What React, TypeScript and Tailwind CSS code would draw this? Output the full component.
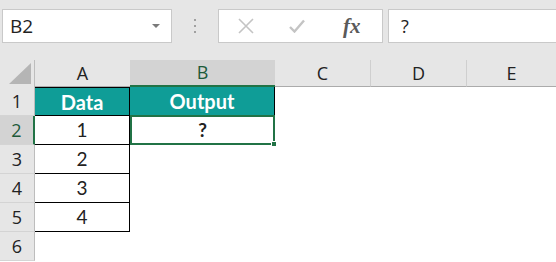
import React from 'react'

const cols = [
  { key: 'A', width: 'w-[95px]' },
  { key: 'B', width: 'w-[145px]' },
  { key: 'C', width: 'w-[96px]' },
  { key: 'D', width: 'w-[96px]' },
  { key: 'E', width: 'flex-1' },
]

const values = ['1', '2', '3', '4']

export default function App() {
  return (
    <div className="w-[556px] h-[262px] overflow-hidden bg-white font-['Open_Sans',sans-serif] text-[#222]">
      {/* formula bar */}
      <div className="h-[60px] bg-[#e6e6e6] flex items-start pt-[9px] pl-[2px]">
        <div className="w-[170px] h-[34px] bg-white border border-[#c9c9c9] flex items-center justify-between pl-[7px] pr-[11px]">
          <span className="text-[19px] leading-none">B2</span>
          <span className="w-0 h-0 border-l-[4px] border-r-[4px] border-t-[4px] border-l-transparent border-r-transparent border-t-[#7a7a7a]" />
        </div>
        <div className="w-[46px] h-[34px] flex flex-col items-center justify-center gap-[4px]">
          <span className="w-[2px] h-[2px] bg-[#a0a0a0]" />
          <span className="w-[2px] h-[2px] bg-[#a0a0a0]" />
          <span className="w-[2px] h-[2px] bg-[#a0a0a0]" />
        </div>
        <div className="w-[165px] h-[34px] bg-white border border-[#c9c9c9] flex items-center">
          <svg width="16" height="16" viewBox="0 0 16 16" className="ml-[19px]">
            <path d="M1 1 L15 15 M15 1 L1 15" stroke="#c4c4c4" strokeWidth="1.6" fill="none" />
          </svg>
          <svg width="16" height="14" viewBox="0 0 16 14" className="ml-[35px]">
            <path d="M1 8 L5.5 12.5 L15 1.5" stroke="#c4c4c4" strokeWidth="2.4" fill="none" />
          </svg>
          <span className="ml-[38px] text-[21px] leading-none italic font-bold text-[#5a5a5a] font-['Liberation_Serif',serif]">
            fx
          </span>
        </div>
        <div className="ml-[5px] flex-1 h-[34px] bg-white border border-[#c9c9c9] border-r-0 flex items-center pl-[12px]">
          <span className="text-[18px] leading-none">?</span>
        </div>
      </div>

      {/* column headers */}
      <div className="flex h-[27px]">
        <div className="w-[35px] bg-[#e6e6e6] border-r border-[#bdbdbd] flex items-end justify-end pr-[3px] pb-[3px]">
          <span className="w-[22px] h-[21px] bg-[#b5b5b5] [clip-path:polygon(100%_0,100%_100%,0_100%)]" />
        </div>
        {cols.map((c) => (
          <div
            key={c.key}
            className={`${c.width} flex items-center justify-center text-[18px] ${
              c.key === 'B'
                ? 'bg-[#d3d3d3] text-[#1d5a3a] border-b-2 border-[#217346]'
                : 'bg-[#e6e6e6] border-b border-[#ababab]'
            } ${c.key === 'C' || c.key === 'D' ? 'border-r border-r-[#cfcfcf]' : ''}`}
          >
            {c.key}
          </div>
        ))}
      </div>

      {/* rows */}
      {[1, 2, 3, 4, 5, 6].map((n) => (
        <div key={n} className="flex h-[29px]">
          <div
            className={`w-[35px] flex items-center justify-center text-[18px] border-b border-[#d4d4d4] ${
              n === 2 ? 'bg-[#d3d3d3] border-r-2 border-r-[#217346] text-[#1d5a3a]' : 'bg-[#e6e6e6] border-r border-r-[#bdbdbd]'
            }`}
          >
            {n}
          </div>
          {n === 1 && (
            <>
              <div className="w-[95px] bg-[#0f9d97] border border-black border-l-0 flex items-center justify-center text-white font-bold text-[20px] font-['Lato',sans-serif]">
                Data
              </div>
              <div className="w-[145px] bg-[#0f9d97] border-b border-r border-black flex items-center justify-center text-white font-bold text-[20px] font-['Lato',sans-serif]">
                Output
              </div>
            </>
          )}
          {n >= 2 && n <= 5 && (
            <div className="w-[95px] border-r border-b border-black flex items-center justify-center text-[19px] font-['Lato',sans-serif]">
              {values[n - 2]}
            </div>
          )}
          {n === 2 && (
            <div className="relative w-[145px] -mt-[1px] h-[30px] border-2 border-[#217346] flex items-center justify-center text-[19px] font-bold font-['Lato',sans-serif]">
              ?
              <span className="absolute -right-[4px] -bottom-[4px] w-[6px] h-[6px] bg-[#217346] border border-white" />
            </div>
          )}
          {n === 6 && <div className="w-[95px]" />}
          <div className="flex-1" />
        </div>
      ))}
    </div>
  )
}
